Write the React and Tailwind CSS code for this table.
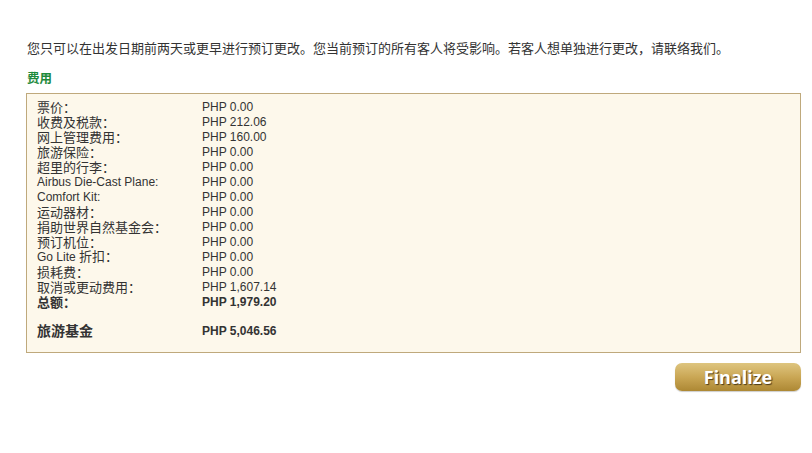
import React from "react";

const rows = [
  ["票价：", "PHP 0.00"],
  ["收费及税款：", "PHP 212.06"],
  ["网上管理费用：", "PHP 160.00"],
  ["旅游保险：", "PHP 0.00"],
  ["超里的行李：", "PHP 0.00"],
  ["Airbus Die-Cast Plane:", "PHP 0.00", true],
  ["Comfort Kit:", "PHP 0.00", true],
  ["运动器材：", "PHP 0.00"],
  ["捐助世界自然基金会：", "PHP 0.00"],
  ["预订机位：", "PHP 0.00"],
  [<><span className="text-[12px]">Go Lite </span>折扣：</>, "PHP 0.00"],
  ["损耗费：", "PHP 0.00"],
  ["取消或更动费用：", "PHP 1,607.14"],
];

const App = () => {
  return (
    <div
      className="w-[812px] h-[453px] bg-white text-[#333] pl-[26px] pr-[11px] pt-[41px]"
      style={{ fontFamily: '"Liberation Sans", Arial, "Noto Sans CJK SC", sans-serif' }}
    >
      {/* 提示 */}
      <p className="text-[13px] leading-[16px] pl-[1px]">
        您只可以在出发日期前两天或更早进行预订更改。您当前预订的所有客人将受影响。若客人想单独进行更改，请联络我们。
      </p>

      {/* 标题 */}
      <h2 className="mt-[14px] text-[12.5px] leading-[16px] font-bold text-[#1d8a3c] pl-[1px]">费用</h2>

      {/* 费用表 */}
      <div className="mt-[6px] border border-[#bfa97c] bg-[#fdf8eb] pl-[10px] pt-[6px] pb-[13px]">
        {rows.map(([label, value, latin], i) => (
          <div key={i} className="flex items-center h-[15px] leading-[15px]">
            <span className={`w-[165px] ${latin ? "text-[12px]" : "text-[13px] -mt-[1px]"}`}>{label}</span>
            <span className="text-[12px]">{value}</span>
          </div>
        ))}
        <div className="flex items-center h-[15px] leading-[15px] font-bold">
          <span className="w-[165px] text-[13px] -mt-[1px]">总额：</span>
          <span className="text-[12px]">PHP 1,979.20</span>
        </div>
        <div className="flex items-center h-[15px] leading-[15px] font-bold mt-[14px]">
          <span className="w-[165px] text-[14px] -mt-[1px]">旅游基金</span>
          <span className="text-[12px]">PHP 5,046.56</span>
        </div>
      </div>

      {/* 按钮 */}
      <div className="flex justify-end mt-[10px]">
        <button
          className="w-[126px] h-[28px] rounded-[7px] bg-gradient-to-b from-[#dec57f] via-[#caa755] to-[#ad8833] text-white font-bold text-[18px] leading-none shadow-[0_1px_1px_rgba(0,0,0,0.2)]"
          style={{ fontFamily: '"Open Sans", sans-serif', textShadow: "1px 1px 1px #4a3a1a" }}
        >
          Finalize
        </button>
      </div>
    </div>
  );
};

export default App;
